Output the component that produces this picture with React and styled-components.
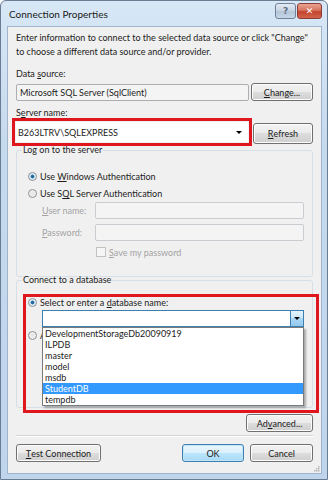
import React from 'react';
import styled, { createGlobalStyle } from 'styled-components';

const GlobalStyle = createGlobalStyle`
  html, body {
    margin: 0;
    padding: 0;
    background: #ffffff;
  }
  body {
    font-family: Lato, "Open Sans", sans-serif;
  }
`;

const Window = styled.div`
  width: 328px;
  height: 480px;
  box-sizing: border-box;
  display: flex;
  flex-direction: column;
  border: 1px solid #6a7c92;
  border-radius: 6px 6px 0 0;
  background: linear-gradient(180deg, #d7e7f6 0%, #c6daee 30%, #bfd5ec 100%);
  font-family: Lato, "Open Sans", sans-serif;
  font-size: 9px;
  color: #1c1c1c;
`;

const TitleBar = styled.div`
  height: 25px;
  display: flex;
  align-items: flex-start;
  justify-content: space-between;
  padding: 0 5px 0 8px;
`;

const Title = styled.div`
  font-size: 10px;
  line-height: 26px;
  color: #1a1a1a;
`;

const Caption = styled.div`
  display: flex;
  gap: 1px;
  margin-top: 2px;
`;

const CaptionButton = styled.div`
  width: ${p => p.$w}px;
  height: 16px;
  box-sizing: border-box;
  border: 1px solid ${p => (p.$close ? '#8b3a35' : '#6f8299')};
  border-radius: 3px;
  display: flex;
  align-items: center;
  justify-content: center;
  font-family: "DejaVu Sans", sans-serif;
  font-weight: bold;
  font-size: 9px;
  color: ${p => (p.$close ? '#ffffff' : '#5d6f86')};
  background: ${p =>
    p.$close
      ? 'linear-gradient(180deg, #e8a493 0%, #d7735f 45%, #c4432d 55%, #d2654c 100%)'
      : 'linear-gradient(180deg, #e3ebf4 0%, #c9d6e4 45%, #b5c6d9 55%, #c6d6e7 100%)'};
`;

const Client = styled.div`
  flex: 1;
  margin: 0 5px 5px 6px;
  border: 1px solid #9fb5ce;
  background: #f0f0f0;
  padding: 4px 8px 0 8px;
  display: flex;
  flex-direction: column;
  position: relative;
`;

const Intro = styled.p`
  margin: 0;
  line-height: 14px;
`;

const Label = styled.div`
  line-height: 14px;
  margin-top: ${p => p.$top || 0}px;
`;

const Key = styled.span`
  text-decoration: underline;
  text-underline-offset: 1px;
`;

const Row = styled.div`
  display: flex;
  align-items: center;
  justify-content: space-between;
  margin-top: ${p => p.$top || 0}px;
`;

const TextBox = styled.div`
  width: ${p => p.$w}px;
  height: 17px;
  box-sizing: border-box;
  border: 1px solid ${p => (p.$disabled ? '#c9cdd2' : '#abadb3')};
  border-radius: 2px;
  background: ${p => (p.$readonly || p.$disabled ? '#f4f4f4' : '#ffffff')};
  padding-left: 3px;
  line-height: 15px;
`;

const Button = styled.div`
  width: ${p => p.$w}px;
  height: ${p => p.$h || 18}px;
  box-sizing: border-box;
  border: 1px solid ${p => (p.$default ? '#3c7fb1' : '#707070')};
  border-radius: 3px;
  display: flex;
  align-items: center;
  justify-content: center;
  box-shadow: inset 0 0 0 1px ${p => (p.$default ? '#c4e5f6' : '#fcfcfc')};
  background: ${p =>
    p.$default
      ? 'linear-gradient(180deg, #eaf6fd 0%, #d9f0fc 50%, #bee6fd 50%, #a7d9f5 100%)'
      : 'linear-gradient(180deg, #f2f2f2 0%, #ebebeb 50%, #dddddd 50%, #cfcfcf 100%)'};
`;

const RedFrame = styled.div`
  border: 3px solid #e0161e;
  padding: 1px;
  margin-left: -4px;
  margin-top: -2px;
`;

const Combo = styled.div`
  width: ${p => p.$w}px;
  height: ${p => p.$h || 20}px;
  box-sizing: border-box;
  background: #ffffff;
  display: flex;
  align-items: center;
  justify-content: space-between;
  padding-left: 2px;
`;

const Arrow = styled.span`
  width: 0;
  height: 0;
  border-left: 3px solid transparent;
  border-right: 3px solid transparent;
  border-top: 3px solid #000000;
  margin-right: ${p => p.$mr || 0}px;
`;

const DropButton = styled.div`
  width: 13px;
  align-self: stretch;
  box-sizing: border-box;
  border-left: 1px solid #3c7fb1;
  display: flex;
  align-items: center;
  justify-content: center;
  background: linear-gradient(180deg, #e4f3fc 0%, #c8e5f7 50%, #a9d6f3 50%, #93c9ee 100%);
`;

const Group = styled.fieldset`
  margin: ${p => p.$top || 0}px 0 0 0;
  padding: ${p => p.$pad};
  border: 1px solid #d5dfe5;
  border-radius: 3px;
  min-width: 0;
  position: relative;
`;

const Legend = styled.legend`
  padding: 0 1px;
  margin-left: 5px;
  line-height: 12px;
`;

const RadioRow = styled.div`
  display: flex;
  align-items: center;
  height: ${p => p.$h || 17}px;
  margin-left: ${p => p.$left || 11}px;
  gap: 3px;
`;

const Radio = styled.span`
  width: 9px;
  height: 9px;
  box-sizing: border-box;
  border-radius: 50%;
  border: 1px solid #8c8f94;
  background: ${p =>
    p.$checked
      ? 'radial-gradient(circle, #1f5d8c 0%, #2c7bb0 35%, #d8e8f2 45%, #f4f4f4 100%)'
      : 'radial-gradient(circle, #e4e4e4 0%, #f6f6f6 100%)'};
`;

const FieldRow = styled.div`
  display: flex;
  align-items: center;
  margin-top: ${p => p.$top || 0}px;
  padding-left: 25px;
`;

const FieldLabel = styled.div`
  width: 53px;
  color: #a3a3a3;
`;

const CheckRow = styled.div`
  display: flex;
  align-items: center;
  gap: 3px;
  height: 14px;
  margin-top: 4px;
  padding-left: 79px;
  color: #a3a3a3;
`;

const CheckBox = styled.span`
  width: 8px;
  height: 8px;
  border: 1px solid #c2c2c2;
  background: #f6f6f6;
`;

const DbCombo = styled.div`
  margin-left: 25px;
  width: 262px;
  height: 17px;
  box-sizing: border-box;
  border: 1px solid #3c7fb1;
  background: #ffffff;
  display: flex;
  justify-content: flex-end;
  position: relative;
`;

const DropList = styled.ul`
  list-style: none;
  margin: 0;
  padding: 0;
  position: absolute;
  top: 16px;
  left: -1px;
  right: -1px;
  border: 1px solid #7a7a7a;
  background: #ffffff;
  box-shadow: 2px 2px 2px rgba(0, 0, 0, 0.3);
  z-index: 2;
`;

const Item = styled.li`
  height: 11px;
  line-height: 11px;
  padding-left: 2px;
  background: ${p => (p.$selected ? '#3399ff' : 'transparent')};
  color: ${p => (p.$selected ? '#ffffff' : '#1c1c1c')};
`;

const Highlight = styled.div`
  position: absolute;
  top: 8px;
  left: 6px;
  right: -7px;
  bottom: -6px;
  border: 3px solid #e0161e;
  pointer-events: none;
`;

const Separator = styled.div`
  height: 0;
  border-top: 1px solid #d5d5d5;
  border-bottom: 1px solid #ffffff;
  margin-top: 3px;
`;

const Footer = styled.div`
  display: flex;
  align-items: center;
  margin-top: 7px;
  gap: 6px;
`;

const Spacer = styled.div`
  flex: 1;
`;

const Grip = styled.svg`
  position: absolute;
  right: 1px;
  bottom: 1px;
`;

const databases = [
  'DevelopmentStorageDb20090919',
  'ILPDB',
  'master',
  'model',
  'msdb',
  'StudentDB',
  'tempdb',
];

const App = () => {
  return (
    <>
      <GlobalStyle />
      <Window>
        <TitleBar>
          <Title>Connection Properties</Title>
          <Caption>
            <CaptionButton $w={21}>?</CaptionButton>
            <CaptionButton $w={25} $close>✕</CaptionButton>
          </Caption>
        </TitleBar>
        <Client>
          <Intro>
            Enter information to connect to the selected data source or click "Change" to
            choose a different data source and/or provider.
          </Intro>
          <Label $top={8}>
            Data <Key>s</Key>ource:
          </Label>
          <Row $top={2}>
            <TextBox $w={233} $readonly>Microsoft SQL Server (SqlClient)</TextBox>
            <Button $w={62}>
              <Key>C</Key>hange...
            </Button>
          </Row>
          <Label $top={5}>
            S<Key>e</Key>rver name:
          </Label>
          <Row>
            <RedFrame>
              <Combo $w={232}>
                B263LTRV\SQLEXPRESS
                <Arrow $mr={6} />
              </Combo>
            </RedFrame>
            <Button $w={60} $h={21}>
              <Key>R</Key>efresh
            </Button>
          </Row>
          <Group $top={-2} $pad="12px 0 17px 0">
            <Legend>Log on to the server</Legend>
            <RadioRow>
              <Radio $checked />
              <span>
                Use <Key>W</Key>indows Authentication
              </span>
            </RadioRow>
            <RadioRow>
              <Radio />
              <span>
                Use S<Key>Q</Key>L Server Authentication
              </span>
            </RadioRow>
            <FieldRow>
              <FieldLabel>
                <Key>U</Key>ser name:
              </FieldLabel>
              <TextBox $w={209} $disabled />
            </FieldRow>
            <FieldRow $top={5}>
              <FieldLabel>
                <Key>P</Key>assword:
              </FieldLabel>
              <TextBox $w={209} $disabled />
            </FieldRow>
            <CheckRow>
              <CheckBox />
              <span>
                <Key>S</Key>ave my password
              </span>
            </CheckRow>
          </Group>
          <Group $top={-3} $pad="8px 0 64px 0">
            <Legend>Connect to a database</Legend>
            <RadioRow $h={16}>
              <Radio $checked />
              <span>
                Select or enter a <Key>d</Key>atabase name:
              </span>
            </RadioRow>
            <DbCombo>
              <DropButton>
                <Arrow />
              </DropButton>
              <DropList>
                {databases.map(name => (
                  <Item key={name} $selected={name === 'StudentDB'}>
                    {name}
                  </Item>
                ))}
              </DropList>
            </DbCombo>
            <RadioRow $h={16}>
              <Radio />
              <span>Attach a database file:</span>
            </RadioRow>
            <Highlight />
          </Group>
          <Row $top={6}>
            <Spacer />
            <Button $w={67}>
              Ad<Key>v</Key>anced...
            </Button>
          </Row>
          <Separator />
          <Footer>
            <Button $w={85}>
              <Key>T</Key>est Connection
            </Button>
            <Spacer />
            <Button $w={62} $default>
              OK
            </Button>
            <Button $w={63}>Cancel</Button>
          </Footer>
          <Grip width="6" height="6" viewBox="0 0 6 6">
            <rect x="4" y="0" width="1.5" height="1.5" fill="#b5b5b5" />
            <rect x="2" y="2" width="1.5" height="1.5" fill="#b5b5b5" />
            <rect x="4" y="2" width="1.5" height="1.5" fill="#b5b5b5" />
            <rect x="0" y="4" width="1.5" height="1.5" fill="#b5b5b5" />
            <rect x="2" y="4" width="1.5" height="1.5" fill="#b5b5b5" />
            <rect x="4" y="4" width="1.5" height="1.5" fill="#b5b5b5" />
          </Grip>
        </Client>
      </Window>
    </>
  );
};

export default App;
